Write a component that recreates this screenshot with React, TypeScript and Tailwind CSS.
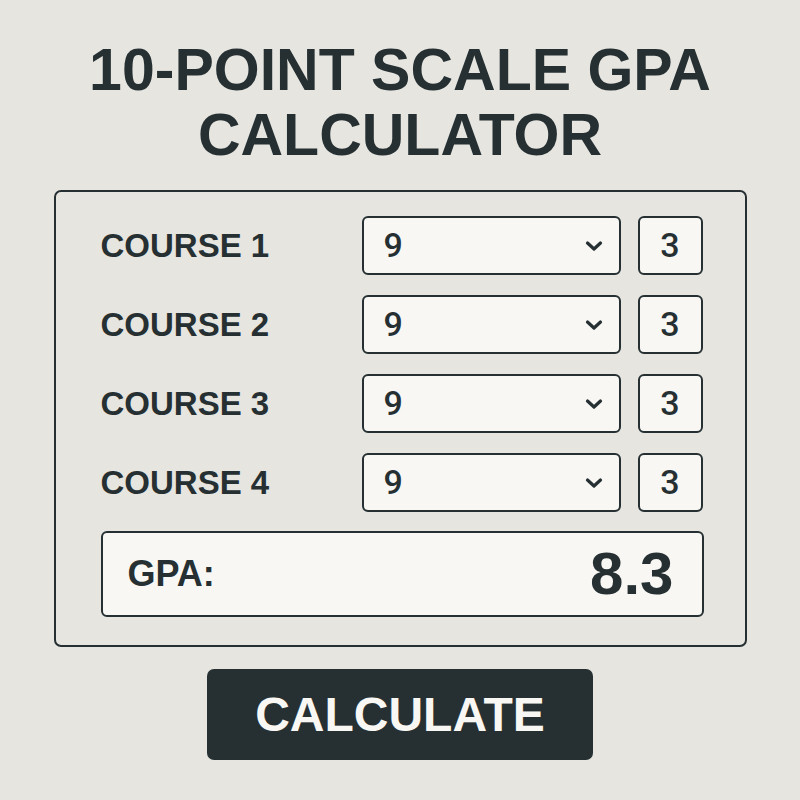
import React from 'react';

const courses = [
  { name: 'COURSE 1', grade: '9', credits: '3' },
  { name: 'COURSE 2', grade: '9', credits: '3' },
  { name: 'COURSE 3', grade: '9', credits: '3' },
  { name: 'COURSE 4', grade: '9', credits: '3' },
];

const Chevron: React.FC = () => (
  <svg width="18" height="12" viewBox="0 0 18 12" fill="none">
    <path d="M2.5 3l6.5 6 6.5-6" stroke="#263033" strokeWidth="3.2" strokeLinecap="round" strokeLinejoin="round" />
  </svg>
);

const App: React.FC = () => {
  return (
    <div
      className="w-[800px] h-[800px] bg-[#e6e5e0] text-[#263033] flex flex-col items-center pt-[38px]"
      style={{ fontFamily: '"Liberation Sans", Arial, sans-serif' }}
    >
      <h1 className="text-[59px] leading-[65px] font-bold text-center">
        10-POINT SCALE GPA
        <br />
        CALCULATOR
      </h1>

      <div className="mt-[22px] w-[693px] border-2 border-[#263033] rounded-[7px] pl-[45px] pr-[41px] pt-[24px] pb-[28px] flex flex-col">
        <div className="flex flex-col gap-[20px]">
          {courses.map((c) => (
            <div key={c.name} className="flex items-center h-[59px]">
              <span className="w-[261px] text-[33px] font-bold">{c.name}</span>
              <div className="w-[259px] h-[59px] bg-[#f8f7f3] border-2 border-[#263033] rounded-[6px] flex items-center justify-between pl-[20px] pr-[16px]">
                <span className="text-[34px] font-medium" style={{ fontFamily: 'Roboto, sans-serif' }}>{c.grade}</span>
                <Chevron />
              </div>
              <div className="ml-[17px] w-[65px] h-[59px] bg-[#f8f7f3] border-2 border-[#263033] rounded-[6px] flex items-center justify-center">
                <span className="text-[34px] font-medium" style={{ fontFamily: 'Roboto, sans-serif' }}>{c.credits}</span>
              </div>
            </div>
          ))}
        </div>

        <div className="mt-[19px] h-[86px] bg-[#f8f7f3] border-2 border-[#263033] rounded-[6px] flex items-center justify-between pl-[25px] pr-[28px]">
          <span className="text-[36px] font-bold">GPA:</span>
          <span className="text-[60px] font-bold">8.3</span>
        </div>
      </div>

      <button className="mt-[22px] w-[386px] h-[91px] bg-[#263033] rounded-[7px] text-[#f8f7f3] text-[48px] font-bold">
        CALCULATE
      </button>
    </div>
  );
};

export default App;
